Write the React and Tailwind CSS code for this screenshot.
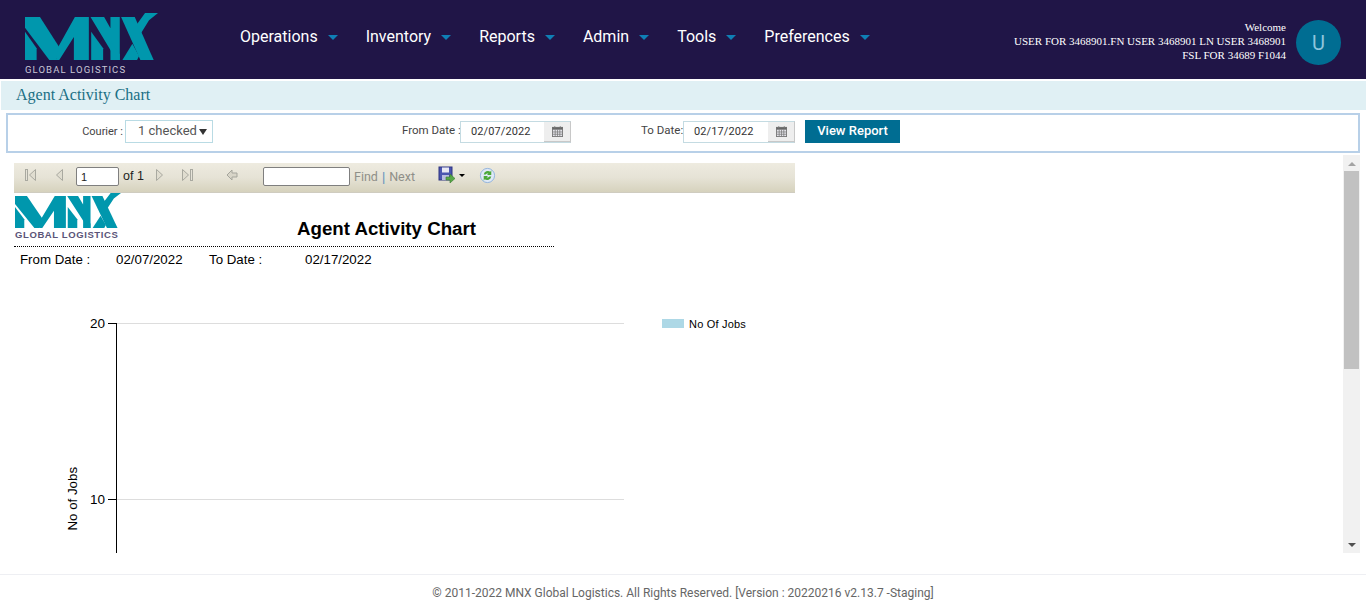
const navItems = ['Operations', 'Inventory', 'Reports', 'Admin', 'Tools', 'Preferences']

function MnxMark({ className }) {
  return (
    <svg viewBox="15 16 400 141" className={className} fill="#0097ad" preserveAspectRatio="none">
      <polygon points="15,28 60,28 124,128 108,157 88,157 15,60" />
      <polygon points="15,72 50,122 50,157 15,157" />
      <polygon points="116,116 165,28 207,28 207,157 162,157 162,88 118,157 108,157" />
      <polygon points="212,28 253,28 272,62 272,28 300,28 300,157 290,157" />
      <polygon points="214,72 250,122 250,157 214,157" />
      <polygon points="272,100 300,140 300,157 272,157" />
      <polygon points="304,28 345,28 402,157 362,157" />
      <polygon points="350,52 376,16 415,16 388,38 362,80" />
      <polygon points="308,157 338,108 358,145 352,157" />
    </svg>
  )
}

function Calendar() {
  return (
    <svg viewBox="0 0 12 12" className="w-[11px] h-[11px]">
      <rect x="0.5" y="1.5" width="11" height="10" fill="#e4e4ea" stroke="#777" />
      <rect x="0.5" y="1.5" width="11" height="2.5" fill="#666" />
      <path d="M3 0v3M9 0v3M1 6.5h10M1 9h10M3.5 4v7M6 4v7M8.5 4v7" stroke="#777" strokeWidth="0.8" />
    </svg>
  )
}

function DateField({ value, width }) {
  return (
    <div className={`flex h-[22px] border border-[#c4dbe2] border-r-[#c8c8c8] ${width}`}>
      <div className="flex-1 bg-white pl-[10px] text-[11px] leading-[19px] tracking-[0.01em] text-[#333]">{value}</div>
      <div className="w-[26px] bg-[#eeeeee] flex items-center justify-center border-b border-[#c8c8c8]">
        <Calendar />
      </div>
    </div>
  )
}

function Tri({ dir = 'right', bar, color = '#a9a9a0' }) {
  const left = dir === 'left'
  return (
    <svg viewBox="0 0 14 14" className="w-[14px] h-[14px]">
      {bar && <rect x={left ? 1.5 : 10.5} y="1.5" width="2" height="11" fill="#e6e3d8" stroke={color} />}
      <polygon points={left ? '11.500,1.500 11.500,12.500 5.500,7' : '2.500,1.500 2.500,12.500 8.500,7'} fill="#e0ddd0" stroke={color} />
    </svg>
  )
}

function ReportToolbar() {
  return (
    <div className="w-[781px] h-[30px] pb-[5px] flex items-center bg-gradient-to-b from-[#eeebe0] via-[#e6e3d6] to-[#d6d2bd] border-b border-[#cfccc0] font-['Liberation_Sans',sans-serif] text-[12.500px] text-[#222]">
      <div className="ml-[10px]"><Tri dir="left" bar /></div>
      <div className="ml-[13px]"><Tri dir="left" /></div>
      <div className="ml-[11px] mt-[2px] w-[43px] h-[19px] bg-white border border-[#7f7f7f] rounded-[2px] pl-[4px] text-[11px] leading-[19px]">1</div>
      <span className="ml-[4px] mt-[3px] w-[31px] whitespace-nowrap">of 1</span>
      <Tri />
      <div className="ml-[12px]"><Tri bar /></div>
      <svg viewBox="0 0 12 12" className="ml-[32px] w-[12px] h-[12px]">
        <polygon points="1,6 6,1 6,4 11,4 11,8 6,8 6,11" fill="#d8d5c8" stroke="#a5a59c" />
      </svg>
      <div className="ml-[25px] mt-[2px] w-[87px] h-[19px] bg-white border border-[#7f7f7f] rounded-[2px]" />
      <span className="ml-[4px] font-['Roboto',sans-serif] text-[12.500px] text-[#8f8f88] mt-[4px]">Find</span>
      <span className="ml-[4px] text-[#5b93bd] mt-[4px]">|</span>
      <span className="ml-[4px] font-['Roboto',sans-serif] text-[12.500px] text-[#8f8f88] mt-[4px]">Next</span>
      <svg viewBox="0 0 18 18" className="ml-[23px] w-[18px] h-[18px] -mt-[1px]">
        <rect x="1" y="1" width="13" height="13" fill="#4a55b0" stroke="#2e3580" />
        <rect x="4" y="1.500" width="7" height="5" fill="#e8e8f4" />
        <rect x="4" y="9" width="7" height="5" fill="#b8bce0" />
        <polygon points="8,11 12,11 12,8 17,12.500 12,17 12,14 8,14" fill="#58a848" stroke="#3a7a30" strokeWidth="0.6" />
      </svg>
      <span className="ml-[3px] w-0 h-0 border-x-[3px] border-x-transparent border-t-[3px] border-t-black" />
      <svg viewBox="0 0 18 18" className="ml-[14px] w-[17px] h-[17px]">
        <circle cx="9" cy="9" r="7.500" fill="#dfe9f6" stroke="#8db0dc" />
        <path d="M5 8a4.500 4.500 0 0 1 7-3l1-1.500v5h-4.500l1.500-1.500A2.500 2.500 0 0 0 7 8z" fill="#4aa838" />
        <path d="M13 10a4.500 4.500 0 0 1-7 3l-1 1.500v-5h4.500L8 11a2.500 2.500 0 0 0 3-1z" fill="#4aa838" />
      </svg>
    </div>
  )
}

function Chart() {
  return (
    <svg width="760" height="285" viewBox="0 0 760 285" className="block font-['Liberation_Sans',sans-serif]">
      <line x1="103" y1="55.500" x2="610" y2="55.500" stroke="#dddddd" />
      <line x1="103" y1="231.500" x2="610" y2="231.500" stroke="#dddddd" />
      <line x1="94" y1="55.500" x2="103" y2="55.500" stroke="#000" />
      <line x1="94" y1="231.500" x2="103" y2="231.500" stroke="#000" />
      <line x1="102.500" y1="55" x2="102.500" y2="285" stroke="#000" />
      <text x="91" y="60" textAnchor="end" fontSize="13.500" fill="#000">20</text>
      <text x="91" y="236" textAnchor="end" fontSize="13.500" fill="#000">10</text>
      <text transform="translate(63 262.500) rotate(-90)" fontSize="13.300" fill="#000">No of Jobs</text>
      <rect x="648" y="51" width="22" height="9" fill="#add8e6" />
      <text x="675" y="60" fontSize="11" letterSpacing="0.2" fill="#000">No Of Jobs</text>
    </svg>
  )
}

export default function App() {
  return (
    <div className="w-[1366px] h-[612px] overflow-hidden bg-white flex flex-col font-['Roboto',sans-serif]">
      <header className="h-[79px] shrink-0 bg-[#201547] flex items-center text-white">
        <div className="w-[240px] shrink-0 pl-[25px] pt-[13px] self-start">
          <MnxMark className="w-[133px] h-[47px] block" />
          <div className="mt-[5px] text-[9.500px] leading-[10px] tracking-[1.1px] text-[#c9c7d6] whitespace-nowrap">GLOBAL LOGISTICS</div>
        </div>
        <nav className="flex items-center gap-[28px] -mt-[6px]">
          {navItems.map(item => (
            <div key={item} className="flex items-center gap-[10px] text-[16px]">
              <span>{item}</span>
              <span className="mt-[2px] w-0 h-0 border-x-[5px] border-x-transparent border-t-[5px] border-t-[#0f7fb5]" />
            </div>
          ))}
        </nav>
        <div className="ml-auto flex items-center pr-[25px]">
          <div className="text-right font-['Liberation_Serif',serif] text-[11px] leading-[14px] whitespace-nowrap pt-[2px]">
            <div>Welcome</div>
            <div>USER FOR 3468901.FN USER 3468901 LN USER 3468901</div>
            <div>FSL FOR 34689 F1044</div>
          </div>
          <div className="ml-[10px] mt-[6px] w-[45px] h-[45px] rounded-full bg-[#006d92] flex items-center justify-center text-[20px] text-[#8ec5dc]">U</div>
        </div>
      </header>

      <div className="mt-[2px] ml-[1px] h-[29px] shrink-0 bg-[#e0f0f4] pl-[15px] font-['Liberation_Serif',serif] text-[16px] leading-[28px] text-[#1a6f84]">
        Agent Activity Chart
      </div>

      <div className="mt-[3px] mx-[6px] h-[40px] shrink-0 border-2 border-[#b8d0e8] pb-[3px] flex items-center text-[11.500px] text-[#444] whitespace-nowrap">
        <span className="ml-[72px] w-[43px] text-right text-[11px] leading-[15px] pb-px">Courier :</span>
        <div className="ml-[2px] w-[88px] h-[23px] border border-[#b9dbe4] pl-[12px] pb-px flex items-center text-[13px] text-[#555]">
          1 checked
          <span className="ml-[2px] mt-[2px] w-0 h-0 border-x-[4px] border-x-transparent border-t-[6px] border-t-[#333]" />
        </div>
        <span className="ml-[189px] w-[56px] text-right pb-px">From Date :</span>
        <div className="ml-[2px]"><DateField value="02/07/2022" width="w-[111px]" /></div>
        <span className="ml-[70px] w-[40px] text-right pb-px">To Date:</span>
        <div className="ml-[2px]"><DateField value="02/17/2022" width="w-[112px]" /></div>
        <button className="ml-[10px] w-[95px] h-[23px] pb-px bg-[#006d92] text-white text-[13px] font-medium">View Report</button>
      </div>

      <div className="mt-[2px] mx-[6px] h-[398px] shrink-0 flex overflow-hidden">
        <div className="flex-1 pl-[8px] pt-[8px] overflow-hidden">
          <ReportToolbar />
          <div className="w-[540px] h-[54px] border-b border-dotted border-black flex font-['Liberation_Sans',sans-serif]">
            <div className="w-[106px] shrink-0 pl-px">
              <MnxMark className="w-[106px] h-[35px] block" />
              <div className="mt-px text-[9.500px] leading-[11px] font-bold tracking-[0.6px] text-[#5a5478] whitespace-nowrap">GLOBAL LOGISTICS</div>
            </div>
            <div className="flex-1 pl-[177px] pt-[25px] text-[18.700px] leading-[22px] font-bold text-black whitespace-nowrap">Agent Activity Chart</div>
          </div>
          <div className="flex h-[24px] pt-[2px] items-center font-['Liberation_Sans',sans-serif] text-[13.300px] text-black">
            <span className="ml-[6px] w-[96px]">From Date :</span>
            <span className="w-[93px]">02/07/2022</span>
            <span className="w-[96px]">To Date :</span>
            <span>02/17/2022</span>
          </div>
          <div className="-mt-[3px]"><Chart /></div>
        </div>
        <div className="w-[17px] shrink-0 bg-[#f1f1f1] flex flex-col items-center">
          <span className="mt-[7px] w-0 h-0 border-x-[4px] border-x-transparent border-b-[4px] border-b-[#a3a3a3]" />
          <div className="mt-[5px] w-[15px] h-[198px] bg-[#c1c1c1]" />
          <span className="mt-auto mb-[6px] w-0 h-0 border-x-[4px] border-x-transparent border-t-[4px] border-t-[#505050]" />
        </div>
      </div>

      <footer className="mt-[21px] border-t border-[#eeeff3] h-[36px] shrink-0 flex items-center justify-center text-[12px] text-[#666]">
        © 2011-2022 MNX Global Logistics. All Rights Reserved. [Version : 20220216 v2.13.7 -Staging]
      </footer>
    </div>
  )
}
